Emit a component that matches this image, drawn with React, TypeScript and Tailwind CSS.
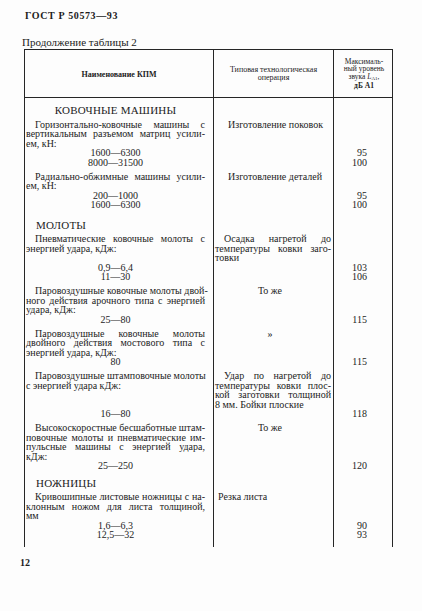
type Entry = {
  desc: string[];
  op?: string[];
  opMode?: 'just' | 'center' | 'plain';
  values: [string, string][];
};

type Section = { title: string; align: 'center' | 'left'; pt: string; entries: Entry[] };

const sections: Section[] = [
  {
    title: 'КОВОЧНЫЕ МАШИНЫ',
    align: 'center',
    pt: 'pt-[7px]',
    entries: [
      {
        desc: ['Горизонтально-ковочные машины с', 'вертикальным разъемом матриц усили-', 'ем, кН:'],
        op: ['Изготовление поковок'],
        opMode: 'plain',
        values: [
          ['1600—6300', '95'],
          ['8000—31500', '100'],
        ],
      },
      {
        desc: ['Радиально-обжимные машины усили-', 'ем, кН:'],
        op: ['Изготовление деталей'],
        opMode: 'plain',
        values: [
          ['200—1000', '95'],
          ['1600—6300', '100'],
        ],
      },
    ],
  },
  {
    title: 'МОЛОТЫ',
    align: 'left',
    pt: 'pt-[10px]',
    entries: [
      {
        desc: ['Пневматические ковочные молоты с', 'энергией удара, кДж:'],
        op: ['Осадка нагретой до', 'температуры ковки заго-', 'товки'],
        opMode: 'just',
        values: [
          ['0,9—6,4', '103'],
          ['11—30', '106'],
        ],
      },
      {
        desc: ['Паровоздушные ковочные молоты двой-', 'ного действия арочного типа с энергией', 'удара, кДж:'],
        op: ['То же'],
        opMode: 'center',
        values: [['25—80', '115']],
      },
      {
        desc: ['Паровоздушные ковочные молоты', 'двойного действия мостового типа с', 'энергией удара, кДж:'],
        op: ['»'],
        opMode: 'center',
        values: [['80', '115']],
      },
      {
        desc: ['Паровоздушные штамповочные молоты', 'с энергией удара кДж:'],
        op: ['Удар по нагретой до', 'температуры ковки плос-', 'кой заготовки толщиной', '8 мм. Бойки плоские'],
        opMode: 'just',
        values: [['16—80', '118']],
      },
      {
        desc: [
          'Высокоскоростные бесшаботные штам-',
          'повочные молоты и пневматические им-',
          'пульсные машины с энергией удара,',
          'кДж:',
        ],
        op: ['То же'],
        opMode: 'center',
        values: [['25—250', '120']],
      },
    ],
  },
  {
    title: 'НОЖНИЦЫ',
    align: 'left',
    pt: 'pt-[7px]',
    entries: [
      {
        desc: ['Кривошипные листовые ножницы с на-', 'клонным ножом для листа толщиной,', 'мм'],
        op: ['Резка листа'],
        opMode: 'plain',
        values: [
          ['1,6—6,3', '90'],
          ['12,5—32', '93'],
        ],
      },
    ],
  },
];

function Lines({ lines }: { lines: string[] }) {
  return (
    <>
      {lines.map((l, i) => (
        <div
          key={i}
          className={
            i < lines.length - 1
              ? i === 0
                ? 'pl-[9px] whitespace-nowrap text-justify [text-align-last:justify]'
                : 'whitespace-nowrap text-justify [text-align-last:justify]'
              : i === 0
                ? 'pl-[9px] whitespace-nowrap'
                : 'whitespace-nowrap'
          }
        >
          {l}
        </div>
      ))}
    </>
  );
}

function Row({ pt, c1, c2, c3 }: { pt: string; c1?: React.ReactNode; c2?: React.ReactNode; c3?: React.ReactNode }) {
  return (
    <div className="flex">
      <div className={'w-[189px] border-r border-[#262626] pl-[1px] pr-[8px] ' + pt}>{c1}</div>
      <div className={'w-[120px] border-r border-[#262626] pl-[1px] pr-[2px] ' + pt}>{c2}</div>
      <div className={'w-[59px] border-r border-[#262626] pr-[25px] text-right ' + pt}>{c3}</div>
    </div>
  );
}

function Op({ e }: { e: Entry }) {
  if (!e.op) return null;
  if (e.opMode === 'center') return <div className="text-center pr-[6px]">{e.op[0]}</div>;
  if (e.opMode === 'plain')
    return <div className={e.op[0].startsWith('Резка') ? 'pl-[3px]' : 'pl-[13px]'}>{e.op[0]}</div>;
  return <Lines lines={e.op} />;
}

export default function App() {
  return (
    <div className="w-[422px] h-[611px] bg-[#fdfdfd] text-[#1c1c1c] font-['Liberation_Serif',serif] overflow-hidden">
      <div className="pt-[10px] pl-[25px] text-[10px] leading-[12px] font-bold tracking-[0.6px]">ГОСТ Р 50573—93</div>
      <div className="mt-[14px] pl-[22px] text-[11px] leading-[12px]">Продолжение таблицы 2</div>

      <div className="mt-[1px] ml-[24px] w-[369px] border-l border-t border-[#262626] text-[10px] leading-[9.5px]">
        {/* header */}
        <div className="flex h-[48px] border-b border-[#262626]">
          <div className="w-[189px] border-r border-[#262626] flex items-center justify-center text-[8px] leading-[8px] font-semibold pt-[2px]">
            Наименование КПМ
          </div>
          <div className="w-[120px] border-r border-[#262626] flex flex-col items-center justify-center text-[8px] leading-[8px]">
            <div>Типовая технологическая</div>
            <div>операция</div>
          </div>
          <div className="w-[59px] border-r border-[#262626] flex flex-col items-center justify-center text-[7.5px] leading-[7.5px] pl-[2px]">
            <div>Максималь-</div>
            <div>ный уровень</div>
            <div className="whitespace-nowrap">
              звука <span className="italic">L</span>
              <span className="text-[5px] relative top-[1px]">A1</span>,
            </div>
            <div className="font-semibold mt-[1px]">дБ А1</div>
          </div>
        </div>

        {sections.map((s, si) => (
          <div key={si}>
            <Row
              pt={s.pt}
              c1={
                <div
                  className={
                    s.align === 'center'
                      ? 'text-center text-[11px] leading-[11px] tracking-[0.2px]'
                      : 'pl-[10px] text-[11px] leading-[11px] tracking-[0.2px]'
                  }
                >
                  {s.title}
                </div>
              }
            />
            {s.entries.map((e, ei) => (
              <div key={ei}>
                <Row pt={ei === 0 ? 'pt-[3.5px]' : 'pt-[4.5px]'} c1={<Lines lines={e.desc} />} c2={<Op e={e} />} />
                {e.values.map(([a, b], vi) => (
                  <Row key={vi} pt="pt-0" c1={<div className="text-center">{a}</div>} c3={<div>{b}</div>} />
                ))}
              </div>
            ))}
          </div>
        ))}
        <Row pt="pt-[7px]" />
      </div>

      <div className="mt-[10px] pl-[20px] text-[10px] leading-[12px] font-bold">12</div>
    </div>
  );
}
